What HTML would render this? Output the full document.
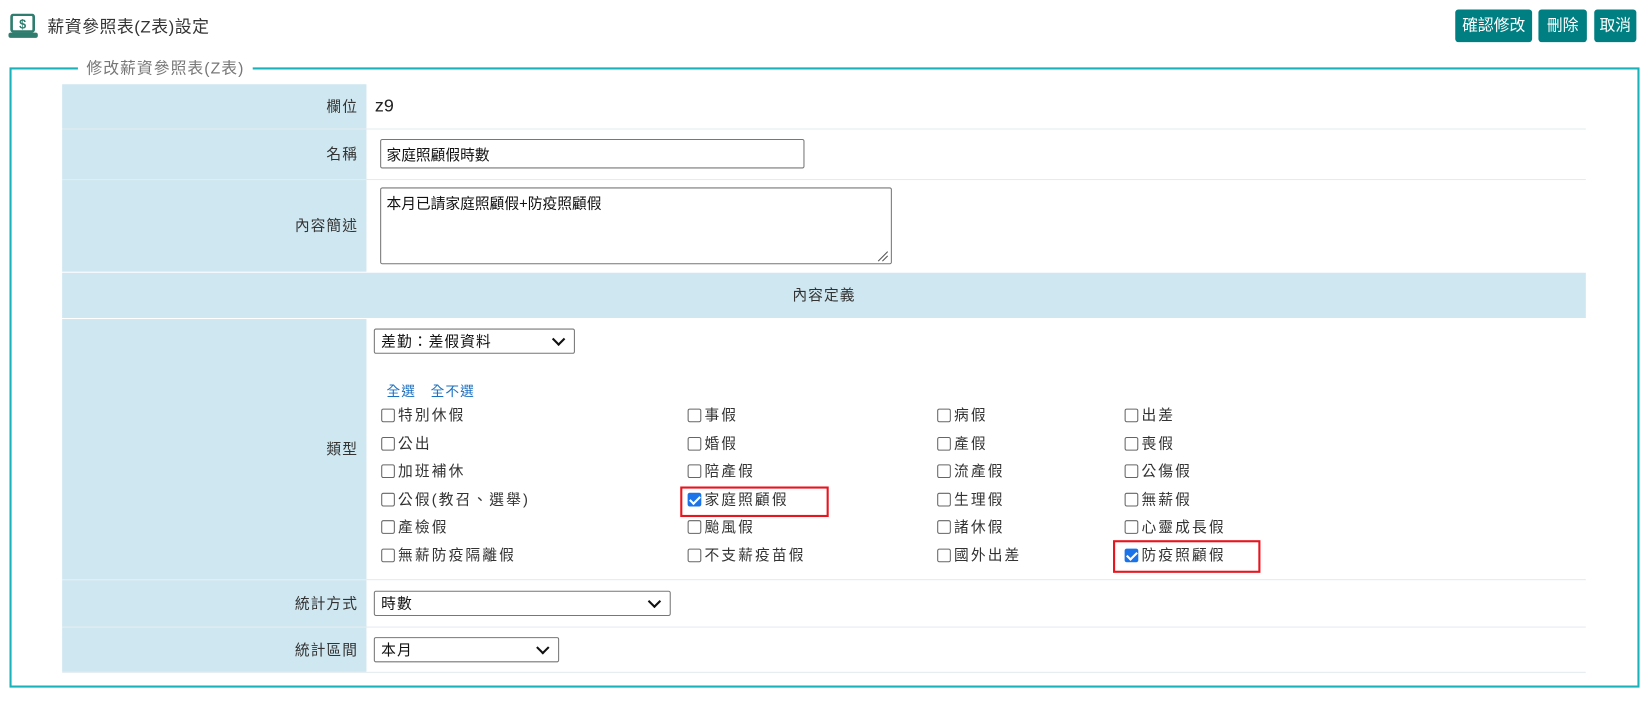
<!DOCTYPE html>
<html><head><meta charset="utf-8"><style>
*{box-sizing:border-box;margin:0;padding:0}
body{width:1651px;height:704px;background:#fff;font-family:"Liberation Sans","Noto Sans CJK TC",sans-serif;color:#333;font-size:14px;position:relative;overflow:hidden}
#w{position:absolute;left:0;top:0;width:1568px;height:669px;transform:scale(1.053);transform-origin:0 0}
.a{position:absolute}
.btn{position:absolute;top:9px;height:31px;background:#007f82;color:#fff;border-radius:3px;font-size:15px;line-height:31px;text-align:center}
.lab{position:absolute;left:59px;width:289px;background:#cfe7f0;text-align:right;padding-right:8px;letter-spacing:1px}
.line{position:absolute;left:59px;width:1447px;height:1px;background:#e3ecef}
.cb{position:absolute;font-size:14px;letter-spacing:2px;line-height:16px;color:#333;white-space:nowrap}
.cb i{display:inline-block;width:13px;height:13px;border:1px solid #666;border-radius:2px;vertical-align:-2px;margin-right:3px;background:#fff}
.cb i.c{background:#1a73e8;border-color:#1a73e8;position:relative}
.cb i.c:after{content:"";position:absolute;left:3px;top:0px;width:4px;height:8px;border:solid #fff;border-width:0 2px 2px 0;transform:rotate(45deg)}
.sel{position:absolute;border:1px solid #777;border-radius:2px;background:#fff;font-size:14px;padding-left:6px;letter-spacing:1px;color:#111}
.sel:after{content:"";position:absolute;right:10px;top:50%;width:7px;height:7px;border:solid #111;border-width:0 2px 2px 0;transform:translateY(-70%) rotate(45deg)}
.red{position:absolute;border:2px solid #e8141e}
</style></head><body><div id="w">
<svg class="a" style="left:8px;top:13px" width="28" height="24" viewBox="0 0 28 24"><rect x="3" y="1" width="21" height="16" rx="2" fill="none" stroke="#2e7d6e" stroke-width="2.5"/><rect x="0" y="18" width="28" height="5" rx="2" fill="#2e7d6e"/><text x="13.5" y="14" font-size="12" font-weight="bold" fill="#2e7d6e" text-anchor="middle" font-family="Liberation Sans">$</text></svg>
<div class="a" style="left:45px;top:12px;font-size:16px;color:#333;letter-spacing:0.5px">薪資參照表(Z表)設定</div>
<div class="btn" style="left:1382px;width:73px">確認修改</div>
<div class="btn" style="left:1461px;width:46px">刪除</div>
<div class="btn" style="left:1514px;width:40px">取消</div>
<div class="a" style="left:9px;top:64px;width:1548px;height:589px;border:2px solid #18b3ba"></div>
<div class="a" style="left:74px;top:54px;background:#fff;padding:0 8px;font-size:15px;color:#777;letter-spacing:1px">修改薪資參照表(Z表)</div>

<div class="lab" style="top:80px;height:42px;line-height:42px">欄位</div>
<div class="a" style="left:356px;top:91px;font-size:17px;color:#222">z9</div>
<div class="line" style="top:122px"></div>
<div class="lab" style="top:123px;height:47px;line-height:47px">名稱</div>
<div class="a" style="left:361px;top:132px;width:403px;height:28px;border:1px solid #777;border-radius:2px;padding:4px 5px;font-size:14px;color:#111">家庭照顧假時數</div>
<div class="line" style="top:170px"></div>
<div class="lab" style="top:171px;height:87px;line-height:87px">內容簡述</div>
<div class="a" style="left:361px;top:178px;width:486px;height:73px;border:1px solid #777;border-radius:2px;padding:4px 5px;font-size:14px;color:#111">本月已請家庭照顧假+防疫照顧假</div>
<svg class="a" style="left:832px;top:237px" width="12" height="12"><path d="M11 2L2 11M11 6L6 11" stroke="#555" stroke-width="1"/></svg>
<div class="a" style="left:59px;top:259px;width:1447px;height:43px;background:#cfe7f0;text-align:center;line-height:43px;letter-spacing:1px">內容定義</div>
<div class="lab" style="top:303px;height:247px;line-height:247px">類型</div>
<div class="sel" style="left:355px;top:312px;width:191px;height:24px;line-height:22px">差勤：差假資料</div>
<div class="a" style="left:367px;top:361px;color:#1a6fc0;font-size:13px;letter-spacing:1px">全選　全不選</div>

<div class="cb" style="left:362px;top:386px"><i></i>特別休假</div>
<div class="cb" style="left:362px;top:413px"><i></i>公出</div>
<div class="cb" style="left:362px;top:439px"><i></i>加班補休</div>
<div class="cb" style="left:362px;top:466px"><i></i>公假(教召、選舉)</div>
<div class="cb" style="left:362px;top:492px"><i></i>產檢假</div>
<div class="cb" style="left:362px;top:519px"><i></i>無薪防疫隔離假</div>

<div class="cb" style="left:653px;top:386px"><i></i>事假</div>
<div class="cb" style="left:653px;top:413px"><i></i>婚假</div>
<div class="cb" style="left:653px;top:439px"><i></i>陪產假</div>
<div class="cb" style="left:653px;top:466px"><i class="c"></i>家庭照顧假</div>
<div class="cb" style="left:653px;top:492px"><i></i>颱風假</div>
<div class="cb" style="left:653px;top:519px"><i></i>不支薪疫苗假</div>

<div class="cb" style="left:890px;top:386px"><i></i>病假</div>
<div class="cb" style="left:890px;top:413px"><i></i>產假</div>
<div class="cb" style="left:890px;top:439px"><i></i>流產假</div>
<div class="cb" style="left:890px;top:466px"><i></i>生理假</div>
<div class="cb" style="left:890px;top:492px"><i></i>諸休假</div>
<div class="cb" style="left:890px;top:519px"><i></i>國外出差</div>

<div class="cb" style="left:1068px;top:386px"><i></i>出差</div>
<div class="cb" style="left:1068px;top:413px"><i></i>喪假</div>
<div class="cb" style="left:1068px;top:439px"><i></i>公傷假</div>
<div class="cb" style="left:1068px;top:466px"><i></i>無薪假</div>
<div class="cb" style="left:1068px;top:492px"><i></i>心靈成長假</div>
<div class="cb" style="left:1068px;top:519px"><i class="c"></i>防疫照顧假</div>

<div class="red" style="left:646px;top:462px;width:141px;height:29px"></div>
<div class="red" style="left:1057px;top:513px;width:140px;height:31px"></div>

<div class="line" style="top:550px"></div>
<div class="lab" style="top:551px;height:44px;line-height:44px">統計方式</div>
<div class="sel" style="left:355px;top:561px;width:282px;height:24px;line-height:22px">時數</div>
<div class="line" style="top:595px"></div>
<div class="lab" style="top:596px;height:42px;line-height:42px">統計區間</div>
<div class="sel" style="left:355px;top:605px;width:176px;height:24px;line-height:22px">本月</div>
<div class="line" style="top:638px"></div>
</div></body></html>
